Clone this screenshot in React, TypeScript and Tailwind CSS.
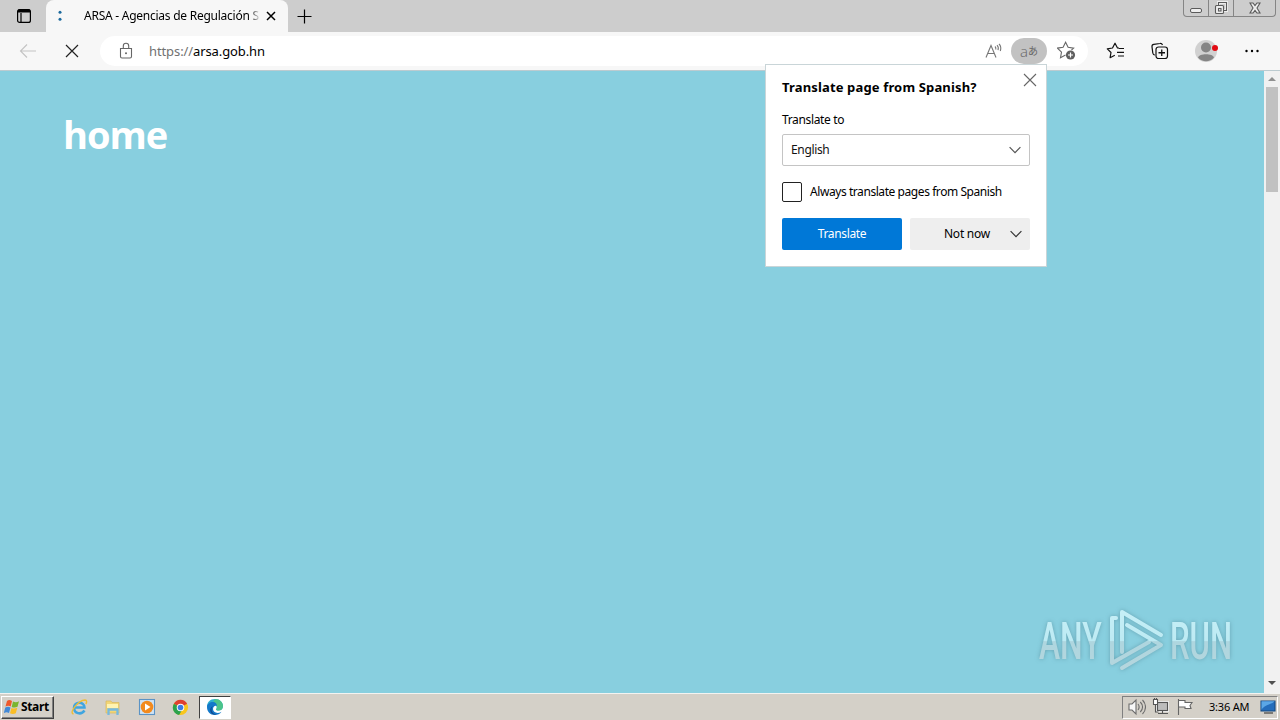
import React from "react";

type IconProps = { className?: string; size?: number; box?: string; children: React.ReactNode };

function Icon({ className = "", size = 20, box = "0 0 20 20", children }: IconProps) {
  return (
    <svg className={`block shrink-0 ${className}`} width={size} height={size} viewBox={box} fill="none" stroke="currentColor" strokeWidth="1.1">
      {children}
    </svg>
  );
}

function TabStrip() {
  return (
    <div className="flex h-8 bg-[#cdcdcd]">
      <div className="flex w-[46px] items-center justify-center pl-0.5">
        <Icon size={16} box="0 0 16 16" className="text-black">
          <rect x="1.6" y="1.6" width="12.8" height="12.8" rx="2" strokeWidth="1.2" />
          <path d="M2 3.5h12M5 5v9" strokeWidth="1.2" />
          <path d="M2 3h12" strokeWidth="3" />
        </Icon>
      </div>
      <div className="flex w-[242px] items-center rounded-t-lg bg-[#f7f7f7] pl-[11px]">
        <Icon size={6} box="0 0 6 12" className="h-3 text-[#1c6a9e]">
          <circle cx="3" cy="2.3" r="1.5" fill="currentColor" stroke="none" />
          <circle cx="3" cy="9.3" r="1.5" fill="currentColor" stroke="none" />
        </Icon>
        <div className="ml-[21px] w-[176px] overflow-hidden whitespace-nowrap bg-linear-to-r from-black from-94% to-[#0003] to-99% bg-clip-text text-[12px] leading-4 tracking-[-0.25px] text-transparent">
          ARSA - Agencias de Regulación S
        </div>
        <Icon size={10} box="0 0 10 10" className="ml-[6px] text-black">
          <path d="M1 1l8 8M9 1L1 9" strokeWidth="1.5" />
        </Icon>
      </div>
      <div className="flex w-8 items-center justify-center">
        <Icon size={15} box="0 0 15 15" className="text-black">
          <path d="M7.5 .5v14M.5 7.5h14" strokeWidth="1.2" />
        </Icon>
      </div>
      <div className="flex-1" />
      <div className="mr-[4px] flex h-[17px] w-[93px] rounded-b-[4px] border border-t-0 border-[#858585] text-[#5b5b5b]">
        <div className="flex w-[25px] justify-center border-r border-[#858585] pt-[8px]">
          <div className="h-[5px] w-3 rounded-[2px] border border-[#5b5b5b] bg-[#eee]" />
        </div>
        <div className="flex w-[25px] justify-center border-r border-[#858585] pt-[1px]">
          <Icon size={14} box="0 0 14 14">
            <path d="M4.5 4V1.5h8v8H10" stroke="#eee" strokeWidth="3" />
            <path d="M4.5 4V1.500h8v8H10" />
            <rect x="1.5" y="4.5" width="8" height="8" rx="1" fill="#eee" />
            <rect x="4.500" y="7.500" width="2.500" height="2.500" />
          </Icon>
        </div>
        <div className="flex flex-1 justify-center pt-[2px]">
          <Icon size={12} box="0 0 12 12">
            <path d="M1 1h3l2 2.7L8 1h3L8 6l3 5H8L6 8.3 4 11H1l3-5z" fill="#eee" />
          </Icon>
        </div>
      </div>
    </div>
  );
}

function AddressRow() {
  return (
    <div className="flex h-[39px] items-center border-b border-[#bccbd0] bg-[#f7f7f7] pl-[18px]">
      <Icon className="text-[#c3c3c3]">
        <path d="M9 3.5L2.5 10 9 16.5M2.5 10H18" />
      </Icon>
      <Icon size={14} box="0 0 14 14" className="ml-[27px] text-[#222]">
        <path d="M1 1l12 12M13 1L1 13" strokeWidth="1.2" />
      </Icon>
      <div className="ml-[21px] flex h-[30px] w-[988px] items-center rounded-full bg-white pl-[17px]">
        <Icon size={18} box="0 0 18 18" className="text-[#666]">
          <path d="M3.500 6.500h11v8a1.500 1.500 0 0 1-1.500 1.500H5a1.500 1.500 0 0 1-1.500-1.500z" />
          <path d="M6.3 6.5V4a2.7 2.7 0 0 1 5.4 0v2.5" />
          <circle cx="9" cy="11.3" r="1" fill="currentColor" stroke="none" />
        </Icon>
        <div className="ml-[14px] flex-1 text-[13px] leading-5 tracking-[-0.1px] text-black">
          <span className="text-[#717171]">https://</span>arsa.gob.hn
        </div>
        <Icon size={18} box="0 0 18 18" className="mr-2 text-[#777]">
          <path d="M1 15.500L6 3.500l5 12M2.700 11.500h6.600" />
          <path d="M10 4.500c.8.8 1 1.800.8 3M12 3.200c1.400 1.300 1.600 3.200 1 5M14 2c1.900 1.900 2.200 4.400 1.300 7" />
        </Icon>
        <div className="mr-[10px] flex h-[26px] w-9 items-center justify-center rounded-full bg-[#c2c2c2] text-[#666]">
          <span className="font-['Open_Sans',sans-serif] text-[15px] font-light leading-4">a</span>
          <span className="text-[10px] leading-4">あ</span>
        </div>
        <Icon className="mr-[11px] text-[#666]">
          <path d="M8.5 14l-5 2.7 1-5.6-4-4 5.6-.8L8.6 1.3l2.5 5 5.5.8-2.2 2" />
          <circle cx="13.5" cy="14" r="4.6" fill="#5f5f5f" stroke="none" />
          <path d="M13.5 11.5v5M11 14h5" stroke="#fff" strokeWidth="1.2" />
        </Icon>
      </div>
      <Icon className="ml-[18px] text-[#111]">
        <path d="M13 7.200L11.500 7 9 2.200 6.500 7l-5.200.8 3.700 3.700-.9 5.200 4.700-2.400M13 7.500h5M11 11.300h7M12 15h6" strokeWidth="1.2" strokeLinejoin="round" />
      </Icon>
      <Icon className="ml-[24px] text-[#111]">
        <path d="M5 14c-1.5 0-2-.8-2.2-2L2 5.8C1.8 4.400 2.500 3.500 3.800 3.300L10 2.500c1.300-.2 2 .3 2.500 1.500" strokeWidth="1.2" />
        <rect x="6" y="6" width="11.500" height="11.500" rx="2.500" strokeWidth="1.200" />
        <path d="M11.750 8.500v6.500M8.500 11.750H15" strokeWidth="1.300" />
      </Icon>
      <Icon size={24} box="0 0 24 24" className="ml-[25px]">
        <circle cx="11" cy="12" r="11" fill="#d1d1d1" stroke="none" />
        <circle cx="11" cy="8.500" r="5" fill="#858585" stroke="none" />
        <path d="M3 18.500C4 14 18 14 19 18.500c-4 5-12 5-16 0" fill="#858585" stroke="none" />
        <circle cx="20" cy="9" r="3" fill="#e20b13" stroke="none" />
      </Icon>
      <Icon size={16} box="0 0 16 16" className="ml-[25px] text-black">
        <g fill="currentColor" stroke="none"><circle cx="2.500" cy="8" r="1.200" /><circle cx="8" cy="8" r="1.200" /><circle cx="13.500" cy="8" r="1.200" /></g>
      </Icon>
    </div>
  );
}

function Chevron({ className = "" }: { className?: string }) {
  return <Icon size={12} box="0 0 12 12" className={className}><path d="M.6 3.200L6 8.600l5.400-5.400" strokeWidth="1.200" /></Icon>;
}

function TranslateDialog() {
  return (
    <div className="absolute left-[765px] top-[64px] h-[203px] w-[282px] border border-[#c9d5d8] bg-white px-4 text-[12px] text-black">
      <div className="flex h-[45px] items-center justify-between">
        <h2 className="mb-[2px] whitespace-nowrap text-[13px] font-bold leading-5 tracking-[0.15px]">Translate page from Spanish?</h2>
        <Icon size={14} box="0 0 14 14" className="mb-[15px] -mr-[7px] text-[#666]"><path d="M1 1l12 12M13 1L1 13" /></Icon>
      </div>
      <div className="h-6 leading-5 tracking-[-0.35px]">Translate to</div>
      <div className="flex h-8 items-center justify-between rounded-[2px] border border-[#c4c4c4] pl-2 pr-2 text-[#111]">
        <span className="tracking-[-0.35px]">English</span><Chevron className="text-[#555]" />
      </div>
      <div className="mt-4 flex h-5 items-center gap-2">
        <div className="size-5 rounded-[2px] border border-[#222]" /><span className="whitespace-nowrap tracking-[-0.43px]">Always translate pages from Spanish</span>
      </div>
      <div className="mt-4 flex h-8 gap-2">
        <div className="flex w-[120px] items-center justify-center rounded-[2px] bg-[#0078d7] tracking-[-0.35px] text-white">Translate</div>
        <div className="flex w-[120px] items-center rounded-[2px] bg-[#eee] pl-[34px] pr-2"><span className="flex-1 tracking-[-0.25px]">Not now</span><Chevron className="text-[#333]" /></div>
      </div>
    </div>
  );
}

function Watermark() {
  return (
    <svg className="absolute left-[1030px] top-[600px] drop-shadow-[0_0_2px_rgba(70,120,135,0.5)]" width="210" height="80" viewBox="0 0 210 80">
      <defs>
        <linearGradient id="mark" x1="0" y1="0" x2="0" y2="80" gradientUnits="userSpaceOnUse">
          <stop offset="0" stopColor="#c9f1f8" /><stop offset=".51" stopColor="#bdeaf3" /><stop offset=".52" stopColor="#aed6df" /><stop offset="1" stopColor="#b8d6dd" />
        </linearGradient>
        <linearGradient id="letters" x1="0" y1="-59" x2="0" y2="21" gradientUnits="userSpaceOnUse">
          <stop offset="0" stopColor="#c9f1f8" /><stop offset=".51" stopColor="#bdeaf3" /><stop offset=".52" stopColor="#aed6df" /><stop offset="1" stopColor="#b8d6dd" />
        </linearGradient>
      </defs>
      <g fill="url(#letters)" fontFamily="Roboto, sans-serif" fontSize="52" fontWeight="500">
        <text transform="translate(9 59) scale(.64 1)" textLength="98" lengthAdjust="spacingAndGlyphs">ANY</text>
        <text transform="translate(140 59) scale(.64 1)" textLength="97" lengthAdjust="spacingAndGlyphs">RUN</text>
      </g>
      <g stroke="url(#mark)" strokeWidth="4" fill="none" strokeLinecap="round" strokeLinejoin="round">
        <path d="M92 52V12L131 35M97 25L131 45 92 68M86 18h-4v45l37-21" />
      </g>
    </svg>
  );
}

function Page() {
  return (
    <div className="flex h-[622px] bg-[#88cfdf]">
      <main className="flex-1 pl-[63px] pt-[38px]">
        <h1 className="font-['Open_Sans',sans-serif] text-[38px] font-bold leading-[50px] tracking-[-1px] text-white">home</h1>
      </main>
      <div className="flex w-4 flex-col items-center bg-[#f1f1f1]">
        <div className="flex h-[16px] items-center"><Icon size={8} box="0 0 8 8"><path d="M0 6l4-4 4 4z" fill="#909090" stroke="none" /></Icon></div>
        <div className="h-[105px] w-3 bg-[#c1c1c1]" />
        <div className="flex-1" />
        <div className="flex h-[20px] items-center"><Icon size={8} box="0 0 8 8"><path d="M0 2l4 4 4-4z" fill="#505050" stroke="none" /></Icon></div>
      </div>
    </div>
  );
}

function WindowsFlag() {
  return (
    <Icon size={17} box="0 0 17 17">
      <g stroke="none"><path d="M3 2c2-1.500 3-1 5 0L6.700 7.500C5 6.500 3.500 6.500 1.500 7.500z" fill="#ef592b" /><path d="M9 2.500c2 1 4 1 6-.3l-1.500 5.500c-2 1-4 1-5.800.2z" fill="#7ab52f" /><path d="M1.300 8.500c2-1 3.500-1 5.200 0L5 14c-1.700-1-3.200-1-5.200 0z" fill="#4289d7" /><path d="M7.500 9c1.800.8 3.800.8 5.800-.2l-1.500 5.500c-2 1-4 1-5.800 0z" fill="#f9bd25" /></g>
    </Icon>
  );
}

function Taskbar() {
  return (
    <div className="flex h-[27px] items-center border-t border-[#f3f3f1] bg-[#d4d0c8]">
      <div className="ml-px flex h-[23px] w-[53px] items-center border border-white border-r-[#404040] border-b-[#404040] pl-[2px] shadow-[inset_-1px_-1px_#808080]">
        <WindowsFlag /><span className="font-['Noto_Sans',sans-serif] text-[12px] font-bold leading-4 tracking-[-0.35px] text-black">Start</span>
      </div>
      <div className="ml-4 flex w-[119px] items-center justify-between">
        <Icon size={18} box="0 0 18 18">
          <path d="M14.500 12.500C11 17.500 4 15.500 4 9.500S14.500 3 14.500 9.500H5" stroke="#3fa5e0" strokeWidth="2.500" />
          <path d="M3.500 16C-1.500 15 8 2.500 15 2c2.200 0 1.800 2.500.8 4" stroke="#edbd35" strokeWidth="1.400" />
        </Icon>
        <Icon size={18} box="0 0 18 18">
          <path d="M2 3h5l1 1.500h7V15H2z" fill="#f2d677" stroke="#d8b75c" strokeWidth=".7" />
          <path d="M3 6h11v4H3z" fill="#fff3b1" stroke="none" /><path d="M4.500 17v-5.500h9V17" stroke="#76b9df" strokeWidth="2.300" />
        </Icon>
        <Icon size={18} box="0 0 18 18">
          <rect x="1.500" y="1.500" width="15" height="15" fill="#cfe3f5" stroke="#5b93c5" /><circle cx="9" cy="9" r="6.300" fill="#f28a1e" stroke="none" /><path d="M7 5.500L12.500 9 7 12.500z" fill="white" stroke="none" />
        </Icon>
        <Icon size={17} box="0 0 18 18">
          <g stroke="none"><circle cx="9" cy="9" r="8" fill="#f9c61b" /><path d="M9 9L2 5a8 8 0 0 1 14 0z" fill="#df4030" /><path d="M9 9L2 5a8 8 0 0 0 5.500 12l3-5z" fill="#2ba24c" /><circle cx="9" cy="9" r="4" fill="white" /><circle cx="9" cy="9" r="3" fill="#3d7de3" /></g>
        </Icon>
      </div>
      <div className="ml-[10px] flex h-[23px] w-8 items-center justify-center border border-[#404040] border-r-white border-b-white bg-white">
        <Icon size={18} box="0 0 18 18">
          <g stroke="none"><path d="M1 9C1 4 4 1 9 1c5 0 8 3.500 8 7 0 3-2 4.500-4.500 4.500-1.500 0-2.500-.5-2.500-1 0-.4.800-.8.800-2C10.800 6 7 4 1 9z" fill="#2fb0cf" /><path d="M9 1c5 0 8 3.500 8 7 0 3-2 4.500-4.500 4.500-1.500 0-2.500-.5-2.500-1 0-.4.800-.8.800-2C10.800 7 9 5 7 4.500z" fill="#4cc48a" /><path d="M1 9c0-3 3-5 6-5 2.500 0 4 2 4 4-2-1-4 .5-4 3 0 3 4 5.500 8.500 2.700C14 16 11.500 17 9 17c-5 0-8-3.500-8-8z" fill="#1479c9" /><path d="M7 8c-3 3-1 8 4 8.600C4 18 2 10 7 8z" fill="#114a91" /></g>
        </Icon>
      </div>
      <div className="flex-1" />
      <div className="mr-[2px] flex h-[23px] w-[156px] items-center border border-[#808080] border-r-white border-b-white pl-[5px]">
        <Icon size={18} box="0 0 18 18" className="text-[#6c6c6c]">
          <path d="M1 6h3l4-4v14l-4-4H1z" fill="#f7f7f7" /><path d="M10 6c1.500 2 1.500 4 0 6M12.300 4c3 3 3 7 0 10M14.500 2c4 4 4 10 0 14" />
        </Icon>
        <Icon size={18} box="0 0 18 18" className="ml-[6px] text-[#555]">
          <rect x="5.500" y="4.500" width="10" height="8" fill="#bcbcbc" stroke="#eee" strokeWidth="3" /><rect x="5.500" y="4.500" width="10" height="8" fill="#bcbcbc" /><path d="M6 15.500h10M10.500 13v3M3.500 6v8h3" /><path d="M1.500 1.500h4v5h-4zM2.500 0v2M4.500 0v2" fill="white" />
        </Icon>
        <Icon size={18} box="0 0 18 18" className="ml-[6px] text-[#666]"><path d="M2.500 1v16M3 2.500h6v2h7l-2 3 1 3H9V9H3" fill="white" /></Icon>
        <div className="ml-[15px] w-[47px] whitespace-nowrap text-[11px] leading-4 tracking-[-0.2px] text-black">3:36 AM</div>
        <Icon size={18} box="0 0 18 18" className="ml-[4px]"><path d="M2 3h14v10H2z" fill="#246dbb" stroke="#174a80" /><path d="M2.500 12C5 7 11 7 15.500 3.500v-.2h-13z" fill="#5ba7e6" stroke="none" /><path d="M5 15h9" stroke="#333" /></Icon>
      </div>
    </div>
  );
}

export default function App() {
  return (
    <div className="relative h-[720px] w-[1280px] overflow-hidden font-['Noto_Sans','Noto_Sans_CJK_JP',sans-serif]">
      <TabStrip /><AddressRow /><Page /><Taskbar /><TranslateDialog /><Watermark />
    </div>
  );
}
